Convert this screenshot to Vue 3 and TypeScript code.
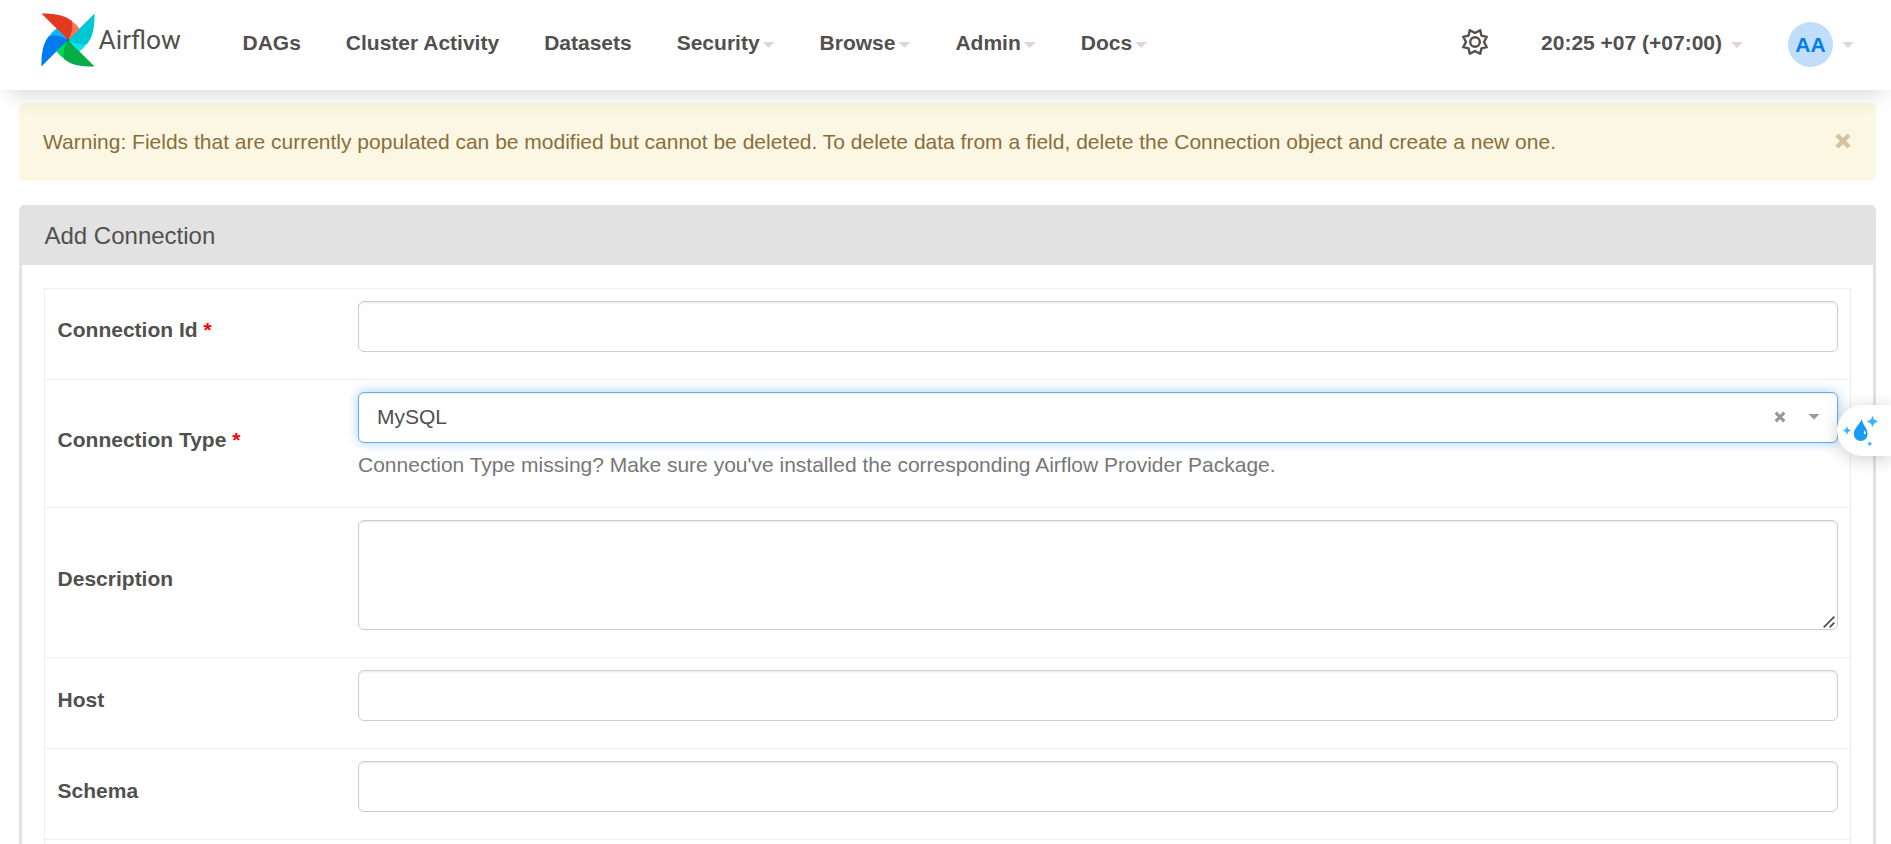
<script setup lang="ts">
interface NavItem { label: string; menu: boolean }
interface Field { label: string; required?: boolean; kind: 'text' | 'select' | 'area' }
interface Blade { turn: number; dark: string; light: string }

const nav: NavItem[] = [
  { label: 'DAGs', menu: false },
  { label: 'Cluster Activity', menu: false },
  { label: 'Datasets', menu: false },
  { label: 'Security', menu: true },
  { label: 'Browse', menu: true },
  { label: 'Admin', menu: true },
  { label: 'Docs', menu: true },
]

// The pinwheel is one blade repeated at quarter turns
const blades: Blade[] = [
  { turn: 0, dark: '#e43921', light: '#ff7557' },
  { turn: 90, dark: '#00c7d4', light: '#11e1ee' },
  { turn: 180, dark: '#04ad46', light: '#00d95a' },
  { turn: 270, dark: '#017cee', light: '#0cb6ff' },
]

const fields: Field[] = [
  { label: 'Connection Id', required: true, kind: 'text' },
  { label: 'Connection Type', required: true, kind: 'select' },
  { label: 'Description', kind: 'area' },
  { label: 'Host', kind: 'text' },
  { label: 'Schema', kind: 'text' },
  { label: '', kind: 'text' },
]
</script>

<template>
  <div class="page">
    <header class="navbar">
      <div class="brand">
        <svg class="logo" viewBox="0 0 54 54">
          <path v-for="b in blades" :key="b.light" :transform="`rotate(${b.turn} 27 27)`" :fill="b.light" d="M30 7.5Q36 11.5 38.5 15.7C38.3 19 34 24.5 27 27Z" />
          <path v-for="b in blades" :key="b.dark" :transform="`rotate(${b.turn} 27 27)`" :fill="b.dark" d="M.4 .4C16 .4 24 2.5 30.7 7.8C32.6 14 30.5 22 27 27C23.5 24 20 18.5 15.5 15.5Z" />
          <circle cx="27" cy="27" r="1.2" fill="#51504f" />
        </svg>
        <span class="name">Airflow</span>
      </div>
      <nav class="links">
        <a v-for="n in nav" :key="n.label">{{ n.label }}<i v-if="n.menu" class="caret"></i></a>
      </nav>
      <div class="right">
        <svg class="gear" viewBox="-13 -13 26 26" fill="none" stroke="#51504f" stroke-width="2.4" stroke-linejoin="round">
          <path d="M0 -9L5.2 -11.8L6.4 -6.4L11.8 -5.2L9 0L11.8 5.2L6.4 6.4L5.2 11.8L0 9L-5.2 11.8L-6.4 6.4L-11.8 5.2L-9 0L-11.8 -5.2L-6.4 -6.4L-5.2 -11.8Z" />
          <circle r="4.8" />
        </svg>
        <a class="clock">20:25 +07 (+07:00)<i class="caret"></i></a>
        <a class="user"><span class="avatar">AA</span><i class="caret"></i></a>
      </div>
    </header>

    <main>
      <div class="alert">
        <span>Warning: Fields that are currently populated can be modified but cannot be deleted. To delete data from a field, delete the Connection object and create a new one.</span>
        <svg class="close" viewBox="0 0 16 16"><path d="M2 2L14 14M14 2L2 14" stroke="#d2c29f" stroke-width="4.4" /></svg>
      </div>

      <section class="panel">
        <h3>Add Connection</h3>
        <div class="table">
          <div v-for="(f, i) in fields" :key="i" class="row" :class="f.kind">
            <label><span>{{ f.label }}<em v-if="f.required"> *</em></span></label>
            <div class="cell">
              <div class="control">
                <template v-if="f.kind === 'select'">
                  <span class="value">MySQL</span>
                  <svg class="clear" viewBox="0 0 12 12"><path d="M1.7 1.7L10.3 10.3M10.3 1.7L1.7 10.3" stroke="#999" stroke-width="3.2" /></svg>
                  <i class="arrow"></i>
                </template>
                <svg v-if="f.kind === 'area'" class="grip" viewBox="0 0 12 12"><path d="M0.7 11.3L11.3 0.7M6.7 11.3L11.3 6.7" stroke="#51504f" stroke-width="1.8" /></svg>
              </div>
              <p v-if="f.kind === 'select'">Connection Type missing? Make sure you've installed the corresponding Airflow Provider Package.</p>
            </div>
          </div>
        </div>
      </section>
    </main>

    <aside class="widget">
      <svg viewBox="0 0 36 32">
        <path d="M18.9 2C19 7.5 24.6 10.5 24.6 17A6.9 7 0 0 1 10.8 17C10.8 11 16.5 8 18.9 2Z" fill="#189cf3" />
        <path d="M21.5 13.3Q23.3 15 22.7 17Q21 17.6 20.8 15.8Z" fill="#fff" />
        <path d="M29.5 -1Q30.3 3.7 35 4.5Q30.3 5.3 29.5 10Q28.7 5.3 24 4.5Q28.7 3.7 29.5 -1ZM4 9.5Q4.6 13 8 13.5Q4.6 14 4 17.5Q3.4 14 0 13.5Q3.4 13 4 9.5ZM26.7 24.5Q27.2 26.4 29 26.8Q27.2 27.2 26.7 29.1Q26.2 27.2 24.4 26.8Q26.2 26.4 26.7 24.5Z" fill="#38b2fa" stroke="#38b2fa" stroke-width=".3" />
      </svg>
    </aside>
  </div>
</template>

<style>
html, body { margin: 0; overflow: hidden; }
</style>

<style scoped>
* { box-sizing: border-box; }
.page {
  position: relative;
  width: 100%;
  height: 844px;
  overflow: hidden;
  background: #fff;
  color: #51504f;
  font: 21px/30px "Liberation Sans", Arial, sans-serif;
}
.navbar {
  position: relative;
  z-index: 2;
  display: flex;
  height: 90px;
  padding: 0 37px 0 41px;
  background: #fff;
  box-shadow: 0 12px 24px -9px rgba(0, 0, 0, 0.18);
}
.brand { display: flex; width: 179px; padding-top: 13px; }
.logo { width: 54px; height: 54px; flex: none; }
.name { margin: 12px 0 0 3.5px; font: 26.4px/30px Roboto, sans-serif; }
.links { display: flex; }
.links a { display: flex; padding: 28px 22.5px 0; font-weight: bold; }
.caret {
  flex: none;
  width: 12px;
  height: 6px;
  margin: 14px 0 0 3px;
  background: #e2d2e2;
  clip-path: polygon(0 0, 100% 0, 50% 100%);
}
.right { display: flex; margin-left: auto; font-weight: bold; }
.gear { width: 26px; height: 26px; margin: 29px 53px 0 0; }
.clock { display: flex; padding-top: 28px; }
.clock .caret { margin-left: 9px; }
.user { display: flex; margin-left: 45px; padding-top: 22px; }
.avatar {
  width: 45px;
  height: 45px;
  border-radius: 50%;
  background: #c0defb;
  color: #017cee;
  line-height: 46px;
  text-align: center;
}
.user .caret { margin: 20px 0 0 9px; }
main { padding: 13px 15px 0 19px; }
.alert {
  display: flex;
  justify-content: space-between;
  height: 78px;
  padding: 24px 25px 24px 24px;
  border-radius: 6px;
  background: #fcf7e3;
  color: #8a6d3b;
  white-space: nowrap;
}
.close { width: 16px; height: 16px; margin-top: 6px; }
.panel {
  height: 700px;
  margin-top: 24px;
  border: 3px solid #e2e2e2;
  border-top: 0;
  border-radius: 6px 6px 0 0;
}
h3 {
  height: 60px;
  margin: 0;
  padding: 0 22.5px;
  background: #e2e2e2;
  font-size: 24px;
  font-weight: normal;
  line-height: 61px;
}
.table { margin: 23px 22px 0; border: 1px solid #eee; }
.row { display: grid; grid-template-columns: 301px 1fr; height: 91px; border-bottom: 1px solid #eee; }
.row.select { height: 128px; }
.row.area { height: 150px; }
label { display: flex; align-items: center; padding: 0 0 7px 12.6px; font-weight: bold; }
.row:first-child label { padding-bottom: 9px; }
em { color: #f00; font-style: normal; }
.cell { padding: 12px 12px 0 12px; }
.control {
  display: flex;
  height: 51px;
  border: 1px solid #ccc;
  border-radius: 6px;
  background: #fff;
  box-shadow: inset 0 1.5px 1.5px rgba(0, 0, 0, 0.075);
}
.area .control { height: 110px; align-items: flex-end; justify-content: flex-end; padding: 0 2px 1px 0; }
.grip { width: 12px; height: 12px; }
.select .control {
  align-items: center;
  padding: 0 17px 2px 18px;
  border-color: #66afe9;
  box-shadow: inset 0 1px 1px rgba(0, 0, 0, 0.075), 0 0 12px rgba(102, 175, 233, 0.6);
}
.value { flex: 1; }
.clear { width: 12px; height: 12px; }
.arrow { width: 12px; height: 6px; margin-left: 22px; background: #999; clip-path: polygon(0 0, 100% 0, 50% 100%); }
p { margin: 7px 0 0; color: #777; }
.widget {
  position: absolute;
  z-index: 3;
  top: 405px;
  right: 0;
  width: 54px;
  height: 51px;
  padding: 12px 0 0 6px;
  border-radius: 26px 0 0 26px;
  background: #fff;
  box-shadow: 0 3px 18px rgba(0, 0, 0, 0.2);
}
.widget svg { display: block; width: 36px; height: 32px; overflow: visible; }
</style>
